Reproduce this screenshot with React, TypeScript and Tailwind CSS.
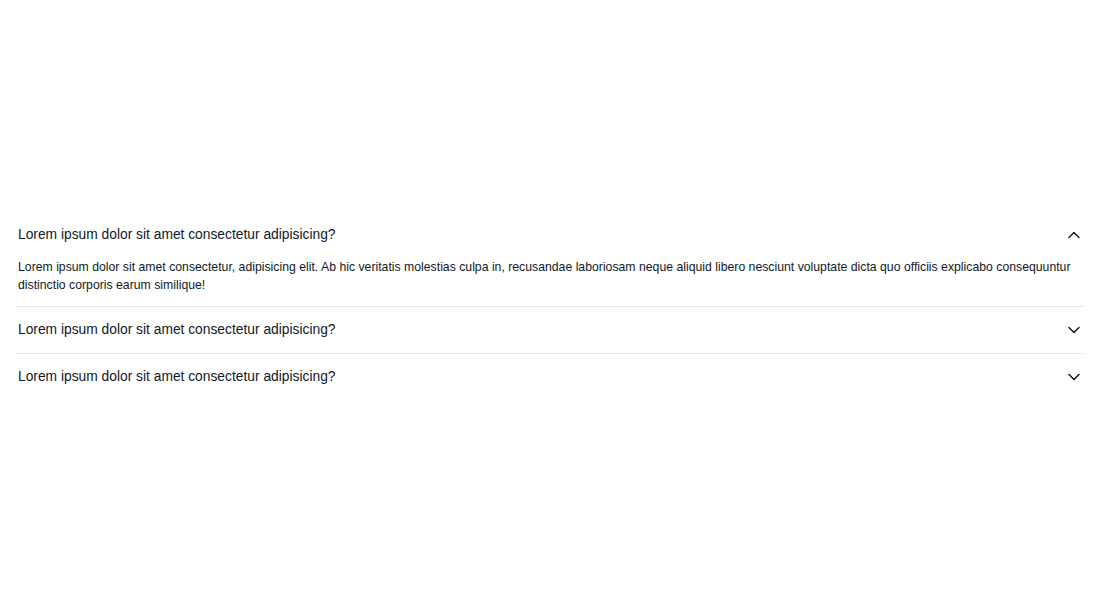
import React, { useState } from 'react';
import { ChevronDown, ChevronUp } from 'lucide-react';

interface FaqItem {
  id: number;
  question: string;
  answer: string;
}

const items: FaqItem[] = [
  {
    id: 1,
    question: 'Lorem ipsum dolor sit amet consectetur adipisicing?',
    answer:
      'Lorem ipsum dolor sit amet consectetur, adipisicing elit. Ab hic veritatis molestias culpa in, recusandae laboriosam neque aliquid libero nesciunt voluptate dicta quo officiis explicabo consequuntur distinctio corporis earum similique!',
  },
  {
    id: 2,
    question: 'Lorem ipsum dolor sit amet consectetur adipisicing?',
    answer:
      'Lorem ipsum dolor sit amet consectetur, adipisicing elit. Ab hic veritatis molestias culpa in, recusandae laboriosam neque aliquid libero nesciunt voluptate dicta quo officiis explicabo consequuntur distinctio corporis earum similique!',
  },
  {
    id: 3,
    question: 'Lorem ipsum dolor sit amet consectetur adipisicing?',
    answer:
      'Lorem ipsum dolor sit amet consectetur, adipisicing elit. Ab hic veritatis molestias culpa in, recusandae laboriosam neque aliquid libero nesciunt voluptate dicta quo officiis explicabo consequuntur distinctio corporis earum similique!',
  },
];

const App: React.FC = () => {
  const [openId, setOpenId] = useState<number | null>(1);

  return (
    <div className="min-h-screen flex items-center bg-white font-['Liberation_Sans',Arial,sans-serif] text-[#111827]">
      <div className="w-full px-4">
        {items.map((item, i) => {
          const open = openId === item.id;
          return (
            <div
              key={item.id}
              className={i < items.length - 1 ? 'border-b border-[#e5e7eb]' : ''}
            >
              <button
                type="button"
                onClick={() => setOpenId(open ? null : item.id)}
                className="w-full flex items-center justify-between py-3 pl-0.5 text-left"
              >
                <span className="text-[13.8px] leading-[22px]">{item.question}</span>
                {open ? (
                  <ChevronUp size={20} strokeWidth={1.75} className="shrink-0" />
                ) : (
                  <ChevronDown size={20} strokeWidth={1.75} className="shrink-0" />
                )}
              </button>
              {open && (
                <p className="pl-0.5 pb-3 text-[12.25px] leading-[18px]">{item.answer}</p>
              )}
            </div>
          );
        })}
      </div>
    </div>
  );
};

export default App;
